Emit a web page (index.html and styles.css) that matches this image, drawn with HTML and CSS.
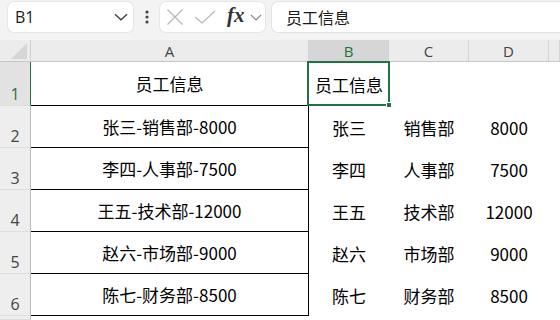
FILE: index.html
```html
<!DOCTYPE html>
<html lang="zh-CN">
<head>
    <meta charset="UTF-8">
    <title>员工信息 - 工作表</title>
    <link rel="stylesheet" href="styles.css">
</head>
<body>

<div class="toolbar">
    <div class="namebox">
        <span>B1</span>
        <svg class="chev" width="14" height="8" viewBox="0 0 14 8"><path d="M1 1.2 L7 6.8 L13 1.2" fill="none" stroke="#404040" stroke-width="1.4"/></svg>
    </div>
    <div class="dots">
        <svg width="4" height="14" viewBox="0 0 4 14"><circle cx="2" cy="2" r="1.6" fill="#444"/><circle cx="2" cy="7" r="1.6" fill="#444"/><circle cx="2" cy="12" r="1.6" fill="#444"/></svg>
    </div>
    <div class="fxgroup">
        <svg class="icon" width="18" height="18" viewBox="0 0 18 18"><path d="M1.5 1.5 L16.5 16.5 M16.5 1.5 L1.5 16.5" stroke="#b8b8b8" stroke-width="1.3" fill="none"/></svg>
        <svg class="icon" width="22" height="14" viewBox="0 0 22 14"><path d="M1 7 L8 13 L21 1" stroke="#b8b8b8" stroke-width="1.3" fill="none"/></svg>
        <span class="fx">fx</span>
        <svg class="chev-sm" width="12" height="7" viewBox="0 0 12 7"><path d="M1 1 L6 6 L11 1" fill="none" stroke="#8a8a8a" stroke-width="1.2"/></svg>
    </div>
    <div class="formula">员工信息</div>
</div>

<div class="sheet">
    <!-- column headers -->
    <div class="corner">
        <svg width="16" height="16" viewBox="0 0 16 16"><polygon points="16,0 16,16 0,16" fill="#d6d6d6"/></svg>
    </div>
    <div class="colhead">A</div>
    <div class="colhead active">B</div>
    <div class="colhead">C</div>
    <div class="colhead">D</div>
    <div class="colhead"></div>

    <!-- row 1 -->
    <div class="rowhead active">1</div>
    <div class="cell boxed">员工信息</div>
    <div class="cell selected"><span class="left">员工信息</span><span class="handle"></span></div>
    <div class="cell"></div>
    <div class="cell"></div>
    <div class="cell"></div>

    <!-- row 2 -->
    <div class="rowhead">2</div>
    <div class="cell boxed">张三-销售部-8000</div>
    <div class="cell">张三</div>
    <div class="cell">销售部</div>
    <div class="cell">8000</div>
    <div class="cell"></div>

    <!-- row 3 -->
    <div class="rowhead">3</div>
    <div class="cell boxed">李四-人事部-7500</div>
    <div class="cell">李四</div>
    <div class="cell">人事部</div>
    <div class="cell">7500</div>
    <div class="cell"></div>

    <!-- row 4 -->
    <div class="rowhead">4</div>
    <div class="cell boxed">王五-技术部-12000</div>
    <div class="cell">王五</div>
    <div class="cell">技术部</div>
    <div class="cell">12000</div>
    <div class="cell"></div>

    <!-- row 5 -->
    <div class="rowhead">5</div>
    <div class="cell boxed">赵六-市场部-9000</div>
    <div class="cell">赵六</div>
    <div class="cell">市场部</div>
    <div class="cell">9000</div>
    <div class="cell"></div>

    <!-- row 6 -->
    <div class="rowhead">6</div>
    <div class="cell boxed">陈七-财务部-8500</div>
    <div class="cell">陈七</div>
    <div class="cell">财务部</div>
    <div class="cell">8500</div>
    <div class="cell"></div>

    <!-- row 7 (cut off) -->
    <div class="rowhead"></div>
    <div class="cell"></div>
    <div class="cell"></div>
    <div class="cell"></div>
    <div class="cell"></div>
    <div class="cell"></div>
</div>

</body>
</html>
```

FILE: styles.css
```css
* {
    box-sizing: border-box;
}

body {
    margin: 0;
    padding: 0;
    width: 560px;
    height: 320px;
    overflow: hidden;
    background: #ffffff;
    font-family: "Noto Sans CJK SC", "Noto Sans", sans-serif;
    color: #000;
}

/* Formula bar */
.toolbar {
    display: flex;
    align-items: flex-start;
    height: 40px;
    padding: 2px 0 0 8px;
    background: #f3f3f3;
    overflow: hidden;
}

.namebox {
    flex: 0 0 125px;
    height: 30px;
    background: #fff;
    border-radius: 6px;
    box-shadow: 0 0 0 1px #e6e6e6;
    display: flex;
    align-items: center;
    justify-content: space-between;
    padding: 0 5px 0 7px;
    font-family: "Open Sans", "Noto Sans", sans-serif;
    font-size: 16px;
    color: #222;
}

.dots {
    flex: 0 0 27px;
    height: 30px;
    display: flex;
    align-items: center;
    justify-content: center;
}

.fxgroup {
    flex: 0 0 105px;
    height: 30px;
    background: #fff;
    border-radius: 6px;
    box-shadow: 0 0 0 1px #e6e6e6;
    display: flex;
    align-items: center;
    padding: 0 0 0 6px;
}

.fxgroup .icon {
    margin-right: 10px;
}

.fxgroup .icon + .icon {
    margin-right: 11px;
}

.fx {
    font-family: "Liberation Serif", serif;
    font-style: italic;
    font-weight: bold;
    font-size: 21px;
    color: #333;
    line-height: 1;
    margin-top: -3px;
    margin-right: 5px;
}

.formula {
    flex: 0 0 320px;
    margin-left: 7px;
    height: 30px;
    background: #fff;
    border-radius: 6px;
    box-shadow: 0 0 0 1px #e3e3e3;
    padding-left: 14px;
    font-size: 16px;
    line-height: 30px;
    color: #1a1a1a;
}

/* Sheet grid */
.sheet {
    display: grid;
    grid-template-columns: 31px 278px 80px 80px 80px 11px;
    grid-template-rows: 22px 44px repeat(5, 42px) 4px;
}

.corner {
    background: #ececec;
    border-right: 1px solid #cfcfcf;
    border-bottom: 1px solid #c6c6c6;
    display: flex;
    align-items: flex-end;
    justify-content: flex-end;
    padding: 0 3px 2px 0;
}

.colhead {
    background: #ececec;
    border-right: 1px solid #d4d4d4;
    border-bottom: 1px solid #c6c6c6;
    font-family: "Open Sans", "Noto Sans", sans-serif;
    font-size: 15px;
    color: #444;
    display: flex;
    align-items: center;
    justify-content: center;
}

.colhead.active {
    background: #d6d6d6;
    color: #1e7145;
}

.rowhead {
    background: #eeeeee;
    border-right: 1px solid #bcbcbc;
    border-bottom: 1px solid #dedede;
    font-family: "Open Sans", "Noto Sans", sans-serif;
    font-size: 16px;
    color: #444;
    display: flex;
    align-items: flex-end;
    justify-content: center;
    line-height: 1;
    padding-bottom: 3px;
}

.rowhead.active {
    background: #e2e2e2;
    color: #1e7145;
    border-right: 1px solid #217346;
}

.cell {
    font-size: 17px;
    display: flex;
    align-items: center;
    justify-content: center;
    white-space: nowrap;
}

.cell.boxed {
    border-right: 1px solid #000;
    border-bottom: 1px solid #000;
}

.cell.selected {
    position: relative;
    justify-content: flex-start;
    padding-left: 6px;
}

.cell.selected::after {
    content: "";
    position: absolute;
    top: -1px;
    left: -2px;
    right: -1px;
    bottom: 0;
    border: 2px solid #217346;
}

.handle {
    position: absolute;
    right: -3px;
    bottom: -2px;
    width: 6px;
    height: 6px;
    background: #217346;
    border: 1px solid #fff;
    z-index: 2;
}
```
